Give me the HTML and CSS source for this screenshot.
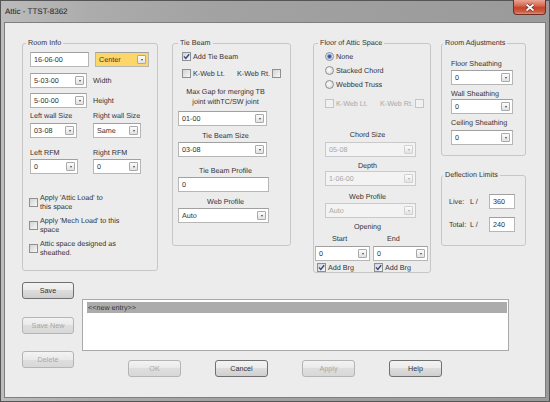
FILE: index.html
```html
<!DOCTYPE html>
<html lang="en">
<head>
    <meta charset="UTF-8">
    <meta name="viewport" content="width=device-width, initial-scale=1.0">
    <title>Attic - TTST-8362</title>
    <link rel="stylesheet" href="styles.css">
</head>
<body>
    <div class="window">
        <div class="titlebar">
            <span class="title">Attic - TTST-8362</span>
            <div class="close">
                <svg width="12" height="9" viewBox="0 0 12 9">
                    <path d="M2.5 1.5 L9.5 7.5 M9.5 1.5 L2.5 7.5" stroke="#6b2a20" stroke-width="3.4" fill="none"/>
                    <path d="M2.5 1.5 L9.5 7.5 M9.5 1.5 L2.5 7.5" stroke="#f4f4f4" stroke-width="2" fill="none"/>
                </svg>
            </div>
        </div>

        <div class="client">
            <div class="groups">
                <!-- Room Info -->
                <fieldset class="grp room-info">
                    <legend>Room Info</legend>
                    <div class="gbody">
                        <div class="row">
                            <div class="tb w59">16-06-00</div>
                            <div class="combo yellow w54 ml6"><span>Center</span><i class="drop"></i></div>
                        </div>
                        <div class="row mt6">
                            <div class="combo w57"><span>5-03-00</span><i class="drop"></i></div>
                            <span class="lbl ml6">Width</span>
                        </div>
                        <div class="row mt5">
                            <div class="combo w57"><span>5-00-00</span><i class="drop"></i></div>
                            <span class="lbl ml6">Height</span>
                        </div>
                        <div class="pair mt3">
                            <span class="lbl">Left wall Size</span>
                            <span class="lbl">Right wall Size</span>
                        </div>
                        <div class="pair mt3">
                            <div class="combo w47"><span>03-08</span><i class="drop"></i></div>
                            <div class="combo w48"><span>Same</span><i class="drop"></i></div>
                        </div>
                        <div class="pair mt10">
                            <span class="lbl">Left RFM</span>
                            <span class="lbl">Right RFM</span>
                        </div>
                        <div class="pair mt2">
                            <div class="combo w48"><span>0</span><i class="drop"></i></div>
                            <div class="combo w48"><span>0</span><i class="drop"></i></div>
                        </div>
                        <div class="chk-row multi mt19">
                            <i class="box"></i>
                            <span>Apply 'Attic Load' to<br>this space</span>
                        </div>
                        <div class="chk-row multi mt5">
                            <i class="box"></i>
                            <span>Apply 'Mech Load' to this<br>space</span>
                        </div>
                        <div class="chk-row multi mt5">
                            <i class="box"></i>
                            <span>Attic space designed as<br>sheathed.</span>
                        </div>
                    </div>
                </fieldset>

                <!-- Tie Beam -->
                <fieldset class="grp tie-beam">
                    <legend>Tie Beam</legend>
                    <div class="gbody">
                        <div class="chk-row ml4">
                            <i class="box"><svg width="7" height="7" viewBox="0 0 7 7"><path d="M1 3.4 L2.8 5.4 L6.2 1.2" stroke="#2e4a8c" stroke-width="1.4" fill="none"/></svg></i>
                            <span>Add Tie Beam</span>
                        </div>
                        <div class="kweb ml4 mt8">
                            <div class="chk-row"><i class="box"></i><span>K-Web Lt.</span></div>
                            <div class="chk-row"><span>K-Web Rt.</span><i class="box"></i></div>
                        </div>
                        <div class="cap two mt9">Max Gap for merging TB<br>joint withTC/SW joint</div>
                        <div class="combo w89 mt4"><span>01-00</span><i class="drop"></i></div>
                        <div class="cap mt5">Tie Beam Size</div>
                        <div class="combo w89 mt2"><span>03-08</span><i class="drop"></i></div>
                        <div class="cap mt9">Tie Beam Profile</div>
                        <div class="tb w91 mt2">0</div>
                        <div class="cap mt5">Web Profile</div>
                        <div class="combo w91 mt2"><span>Auto</span><i class="drop"></i></div>
                    </div>
                </fieldset>

                <!-- Floor of Attic Space -->
                <fieldset class="grp floor">
                    <legend>Floor of Attic Space</legend>
                    <div class="gbody">
                        <div class="chk-row ml10"><i class="radio on"></i><span>None</span></div>
                        <div class="chk-row ml10 mt5"><i class="radio"></i><span>Stacked Chord</span></div>
                        <div class="chk-row ml10 mt5"><i class="radio"></i><span>Webbed Truss</span></div>
                        <div class="kweb off ml10 mt10">
                            <div class="chk-row"><i class="box"></i><span>K-Web Lt.</span></div>
                            <div class="chk-row"><span>K-Web Rt.</span><i class="box"></i></div>
                        </div>
                        <div class="cap ml10 mt22">Chord Size</div>
                        <div class="combo off w91 ml10 mt3"><span>05-08</span><i class="drop"></i></div>
                        <div class="cap ml10 mt4">Depth</div>
                        <div class="combo off w91 ml10 mt1"><span>1-06-00</span><i class="drop"></i></div>
                        <div class="cap ml10 mt6">Web Profile</div>
                        <div class="combo off w91 ml10 mt2"><span>Auto</span><i class="drop"></i></div>
                        <div class="cap ml10 mt4">Opening</div>
                        <div class="opening mt3">
                            <span class="lbl start">Start</span>
                            <span class="lbl end">End</span>
                        </div>
                        <div class="opening mt3">
                            <div class="combo"><span>0</span><i class="drop"></i></div>
                            <div class="combo"><span>0</span><i class="drop"></i></div>
                        </div>
                        <div class="opening mt2">
                            <div class="chk-row brg-l">
                                <i class="box"><svg width="7" height="7" viewBox="0 0 7 7"><path d="M1 3.4 L2.8 5.4 L6.2 1.2" stroke="#2e4a8c" stroke-width="1.4" fill="none"/></svg></i>
                                <span>Add Brg</span>
                            </div>
                            <div class="chk-row brg-r">
                                <i class="box"><svg width="7" height="7" viewBox="0 0 7 7"><path d="M1 3.4 L2.8 5.4 L6.2 1.2" stroke="#2e4a8c" stroke-width="1.4" fill="none"/></svg></i>
                                <span>Add Brg</span>
                            </div>
                        </div>
                    </div>
                </fieldset>

                <div class="side">
                    <fieldset class="grp adjust">
                        <legend>Room Adjustments</legend>
                        <div class="gbody">
                            <div class="lbl">Floor Sheathing</div>
                            <div class="combo w62 mt2"><span>0</span><i class="drop"></i></div>
                            <div class="lbl mt4">Wall Sheathing</div>
                            <div class="combo w62 mt1"><span>0</span><i class="drop"></i></div>
                            <div class="lbl mt4">Ceiling Sheathing</div>
                            <div class="combo w62 mt3"><span>0</span><i class="drop"></i></div>
                        </div>
                    </fieldset>

                    <fieldset class="grp deflect">
                        <legend>Deflection Limits</legend>
                        <div class="gbody">
                            <div class="limits">
                                <span>Live:</span><span>L /</span><div class="tb">360</div>
                                <span>Total:</span><span>L /</span><div class="tb">240</div>
                            </div>
                        </div>
                    </fieldset>
                </div>
            </div>

            <div class="lower">
                <div class="edit-btns">
                    <button class="btn">Save</button>
                    <button class="btn save-new" disabled>Save New</button>
                    <button class="btn delete" disabled>Delete</button>
                </div>
                <div class="entries">
                    <div class="listbox">
                        <div class="item sel">&lt;&lt;new entry&gt;&gt;</div>
                    </div>
                    <div class="actions">
                        <button class="btn" disabled>OK</button>
                        <button class="btn">Cancel</button>
                        <button class="btn" disabled>Apply</button>
                        <button class="btn">Help</button>
                    </div>
                </div>
            </div>
        </div>
    </div>
</body>
</html>
```

FILE: styles.css
```css
* {
    box-sizing: border-box;
}
body {
    margin: 0;
    font-family: "Liberation Sans", Arial, sans-serif;
    font-size: 7.2px;
    color: #333;
    background: #fff;
    text-rendering: geometricPrecision;
}

/* window frame */
.window {
    width: 550px;
    height: 402px;
    padding: 0 4px 4px 4px;
    background: linear-gradient(to right, #bcbcbc 0, #acacac 90px, #a2a2a2 220px, #9a9a9a 100%);
    box-shadow: inset 0 0 0 1px #555555;
    display: flex;
    flex-direction: column;
}
.titlebar {
    height: 22px;
    display: flex;
    align-items: flex-start;
    flex: none;
}
.title {
    margin: 7px 0 0 1px;
    font-size: 8px;
    line-height: 10px;
    color: #222;
}
.close {
    margin-left: auto;
    width: 33px;
    height: 15px;
    border: 1px solid #6a3026;
    border-top: none;
    border-radius: 0 0 4px 4px;
    background: linear-gradient(#e9a595 0, #d66a52 40%, #c4432a 55%, #cf5e45 85%, #e38f7a 100%);
    display: flex;
    align-items: center;
    justify-content: center;
}
.close svg {
    display: block;
}
.client {
    flex: 1;
    background: #ececec;
    border: 1px solid #7e7e7e;
    padding: 15px 0 0 17px;
}

/* group boxes */
.groups {
    display: flex;
    align-items: flex-start;
}
.grp {
    margin: 0;
    padding: 0;
    min-width: 0;
    border: 1px solid #c7c7c7;
    border-radius: 3px;
}
.grp legend {
    padding: 0 2px;
    margin-left: 3px;
    line-height: 10px;
    height: 10px;
}
.room-info {
    width: 136px;
    height: 233px;
}
.room-info .gbody {
    padding: 4px 0 0 7px;
}
.tie-beam {
    width: 119px;
    height: 208px;
    margin-left: 14px;
}
.tie-beam legend {
    margin-left: 5px;
}
.tie-beam .gbody {
    padding: 4px 0 0 5px;
}
.floor {
    width: 118px;
    height: 235px;
    margin-left: 22px;
}
.floor legend {
    margin-left: 4px;
}
.floor .gbody {
    padding: 4px 0 0 1px;
}
.side {
    width: 85px;
    margin-left: 10px;
}
.adjust {
    width: 85px;
    height: 118px;
}
.adjust legend,
.deflect legend {
    margin-left: 1px;
}
.adjust .gbody {
    padding: 11px 0 0 9px;
}
.deflect {
    width: 85px;
    height: 76px;
    margin-top: 14px;
}
.deflect .gbody {
    padding: 14px 0 0 7px;
}

/* layout helpers */
.row {
    display: flex;
    align-items: center;
}
.pair {
    display: grid;
    grid-template-columns: 63px 1fr;
    align-items: center;
}
.lbl {
    line-height: 9px;
    white-space: nowrap;
}
.cap {
    width: 95px;
    text-align: center;
    line-height: 9px;
}
.cap.two {
    line-height: 10px;
}
.floor .cap {
    width: 85px;
}
.kweb {
    width: 99px;
    display: flex;
    justify-content: space-between;
}
.kweb .chk-row {
    gap: 2px;
}
.kweb.off {
    color: #a8a8a8;
}
.kweb.off .box {
    border-color: #c4c4c4;
    background: #f1f1f1;
}
.opening {
    display: grid;
    grid-template-columns: 55px 55px;
    column-gap: 3px;
    align-items: center;
}
.opening .start {
    padding-left: 17px;
}
.opening .end {
    padding-left: 14px;
}
.brg-l {
    padding-left: 2px;
}
.brg-r {
    padding-left: 1px;
}
.limits {
    display: grid;
    grid-template-columns: 21px 19px 26px;
    grid-auto-rows: 15px;
    row-gap: 8px;
    align-items: center;
}

.ml4 { margin-left: 4px; }
.ml6 { margin-left: 6px; }
.ml10 { margin-left: 10px; }
.mt1 { margin-top: 1px; }
.mt2 { margin-top: 2px; }
.mt3 { margin-top: 3px; }
.mt4 { margin-top: 4px; }
.mt5 { margin-top: 5px; }
.mt6 { margin-top: 6px; }
.mt8 { margin-top: 8px; }
.mt9 { margin-top: 9px; }
.mt10 { margin-top: 10px; }
.mt19 { margin-top: 19px; }
.mt22 { margin-top: 22px; }
.w47 { width: 47px; }
.w48 { width: 48px; }
.w54 { width: 54px; }
.w57 { width: 57px; }
.w59 { width: 59px; }
.w62 { width: 62px; }
.w89 { width: 89px; }
.w91 { width: 91px; }

/* text boxes and combos */
.tb,
.combo {
    height: 15px;
    background: #fff;
    border: 1px solid #b6b6b6;
    border-top-color: #a0a0a0;
    padding-left: 3px;
    line-height: 13px;
    white-space: nowrap;
}
.combo {
    display: flex;
    align-items: center;
    justify-content: space-between;
    padding-right: 2px;
}
.combo.yellow {
    background: #fdd66a;
}
.drop {
    width: 9px;
    height: 9px;
    border: 1px solid #a9a9a9;
    border-radius: 1px;
    background: linear-gradient(#fcfcfc, #e2e2e2);
    display: flex;
    align-items: center;
    justify-content: center;
}
.drop::after {
    content: "";
    border-left: 1.5px solid transparent;
    border-right: 1.5px solid transparent;
    border-top: 2px solid #4a4a4a;
}
.combo.off {
    background: #f3f3f3;
    color: #a8a8a8;
    border-color: #cacaca;
}
.combo.off .drop {
    border-color: #d0d0d0;
}
.combo.off .drop::after {
    border-top-color: #a8a8a8;
}

/* check boxes and radios */
.chk-row {
    display: flex;
    align-items: center;
    gap: 2px;
    line-height: 9px;
    white-space: nowrap;
}
.chk-row.multi {
    margin-left: -1px;
}
.box {
    flex: none;
    width: 9px;
    height: 9px;
    border: 1px solid #8e8f8f;
    background: linear-gradient(135deg, #d3d3d3, #f7f7f7);
}
.box svg {
    display: block;
}
.radio {
    flex: none;
    width: 9px;
    height: 9px;
    border: 1px solid #8e8f8f;
    border-radius: 50%;
    background: radial-gradient(circle at 40% 40%, #ffffff, #cfcfcf);
}
.radio.on {
    background: radial-gradient(circle, #27479a 0, #3e64b8 1.3px, #a8bce2 2.4px, #e9e9e9 3.2px);
}

/* lower area */
.lower {
    display: flex;
    margin-top: 9px;
}
.edit-btns {
    width: 52px;
    display: flex;
    flex-direction: column;
}
.save-new {
    margin-top: 18px;
}
.delete {
    margin-top: 17px;
}
.entries {
    margin-left: 8px;
}
.listbox {
    width: 427px;
    height: 52px;
    margin-top: 17px;
    background: #fff;
    border: 1px solid #a9a9a9;
    padding: 2px 1px 0 4px;
}
.item {
    height: 11px;
    line-height: 11px;
    padding-left: 1px;
}
.item.sel {
    background: #acacac;
}
.actions {
    display: flex;
    gap: 34px;
    margin-top: 9px;
    padding-left: 46px;
}
.btn {
    width: 52px;
    height: 17px;
    padding: 0;
    font: inherit;
    color: #333;
    border: 1px solid #707070;
    border-radius: 3px;
    background: linear-gradient(#f3f3f3 0, #ebebeb 50%, #dddddd 50%, #cfcfcf 100%);
}
.actions .btn {
    width: 53px;
}
.btn:disabled {
    color: #a8a8a8;
    border-color: #b4b4b4;
    background: linear-gradient(#f3f3f3 0, #e9e9e9 50%, #dedede 50%, #d8d8d8 100%);
}
```
